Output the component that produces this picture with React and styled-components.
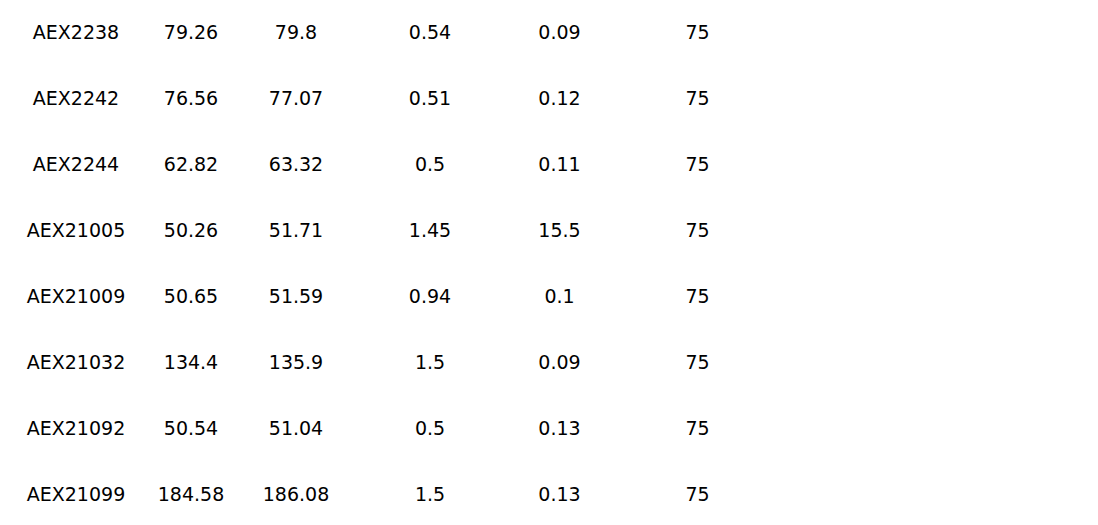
import React from "react";
import styled, { createGlobalStyle } from "styled-components";

const rows = [
  ["AEX2238", "79.26", "79.8", "0.54", "0.09", "75"],
  ["AEX2242", "76.56", "77.07", "0.51", "0.12", "75"],
  ["AEX2244", "62.82", "63.32", "0.5", "0.11", "75"],
  ["AEX21005", "50.26", "51.71", "1.45", "15.5", "75"],
  ["AEX21009", "50.65", "51.59", "0.94", "0.1", "75"],
  ["AEX21032", "134.4", "135.9", "1.5", "0.09", "75"],
  ["AEX21092", "50.54", "51.04", "0.5", "0.13", "75"],
  ["AEX21099", "184.58", "186.08", "1.5", "0.13", "75"],
];

const GlobalStyle = createGlobalStyle`
  html, body {
    margin: 0;
    padding: 0;
    background: #ffffff;
  }
`;

export default function App() {
  return (
    <>
      <GlobalStyle />
      <Table>
        {rows.map((row, idx) => (
          <Row key={idx}>
            {row.map((cell, i) => (
              <Cell key={i}>{cell}</Cell>
            ))}
          </Row>
        ))}
      </Table>
    </>
  );
}

const Table = styled.div`
  display: flex;
  flex-direction: column;
  margin-top: -1px;
  padding-left: 8px;
  font-family: "DejaVu Sans", Verdana, sans-serif;
  font-size: 19px;
  color: #000;
`;

const Row = styled.div`
  display: grid;
  grid-template-columns: 136px 94px 116px 152px 107px 169px;
  height: 66px;
  align-items: center;
`;

const Cell = styled.div`
  text-align: center;
  line-height: 66px;
  white-space: nowrap;
`;
